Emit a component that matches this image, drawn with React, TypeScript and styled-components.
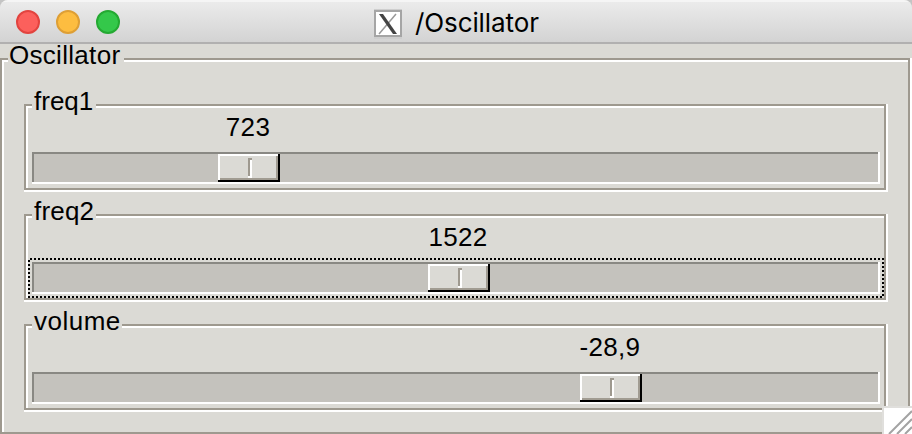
import React from "react";
import styled, { createGlobalStyle } from "styled-components";

const dark = "#9e998f";
const face = "#dbdad5";

const Global = createGlobalStyle`
  * { box-sizing: border-box; }
  body { margin: 0; overflow: hidden; background: #c4c4c4; }
`;

const Window = styled.main`
  position: relative;
  width: 912px;
  height: 434px;
  overflow: hidden;
  display: flex;
  flex-direction: column;
  background: ${face};
  border-radius: 8px 8px 0 0;
  color: #000;
  font-family: "Liberation Sans", Arial, sans-serif;
`;

const TitleBar = styled.header`
  height: 44px;
  flex: none;
  display: grid;
  grid-template-columns: 374px auto 1fr;
  align-items: center;
  background: linear-gradient(#f5f5f5 2px, #ebebeb 2px, #d3d3d3 42px);
  border-bottom: 2px solid #b1b0b0;
`;

const Lights = styled.div`
  display: flex;
  gap: 16px;
  padding: 2px 0 0 16px;
`;

const Light = styled.span<{ $fill: string; $edge: string }>`
  width: 24px;
  height: 24px;
  border-radius: 50%;
  background: ${(p) => p.$fill};
  border: 2px solid ${(p) => p.$edge};
`;

const Title = styled.h1`
  margin: 4px 0 0;
  padding-left: 13px;
  font: 400 26px/32px Inter, sans-serif;
  letter-spacing: -0.1px;
`;

const XIcon = styled.svg`
  display: block;
  margin-top: 5px;
`;

const Content = styled.div`
  height: 390px;
  padding-top: 14px;
`;

const Frame = styled.section<{ $height: number }>`
  display: flow-root;
  height: ${(p) => p.$height}px;
  background:
    linear-gradient(#fff, #fff) right top / 2px 100% no-repeat,
    linear-gradient(#fff, #fff) left bottom / 100% 2px no-repeat,
    linear-gradient(${dark}, ${dark}) left top / 100% 2px no-repeat,
    linear-gradient(${dark}, ${dark}) left top / 2px 100% no-repeat,
    linear-gradient(${dark}, ${dark}) right 2px top 0 / 2px calc(100% - 2px) no-repeat,
    linear-gradient(${dark}, ${dark}) left 0 bottom 2px / calc(100% - 2px) 2px no-repeat,
    linear-gradient(#fff, #fff) 2px 2px / calc(100% - 6px) 2px no-repeat,
    linear-gradient(#fff, #fff) 2px 2px / 2px calc(100% - 6px) no-repeat;
`;

const Legend = styled.h2<{ $width: number; $indent: number; $tracking: number }>`
  width: ${(p) => p.$width}px;
  height: 22px;
  margin: -14px 0 0 8px;
  padding-left: ${(p) => p.$indent}px;
  background: ${face};
  font-size: 26px;
  font-weight: 400;
  line-height: 22px;
  letter-spacing: ${(p) => p.$tracking}px;
  white-space: nowrap;
`;

const Sliders = styled.div`
  display: grid;
  gap: 22px;
  padding: 38px 24px 0;
`;

const Slider = styled(Frame)`
  position: relative;
`;

const Value = styled.output<{ $center: number }>`
  display: block;
  width: 100px;
  height: 28px;
  margin: 1px 0 11px ${(p) => p.$center - 50}px;
  text-align: center;
  font-size: 26px;
  line-height: 28px;
  letter-spacing: 0.3px;
`;

const Trough = styled.div`
  height: 32px;
  margin: 0 8px;
  padding: 2px;
  background:
    linear-gradient(#fff, #fff) right top / 2px 100% no-repeat,
    linear-gradient(#fff, #fff) left bottom / 100% 2px no-repeat,
    linear-gradient(#898883, #898883) left top / 100% 2px no-repeat,
    linear-gradient(#898883, #898883) left top / 2px 100% no-repeat,
    #c4c2bd;
`;

const Thumb = styled.div<{ $left: number }>`
  width: 62px;
  height: 28px;
  margin-left: ${(p) => p.$left}px;
  padding: 4px 0 0 30px;
  background:
    linear-gradient(#000, #000) right top / 2px 100% no-repeat,
    linear-gradient(#000, #000) left bottom / 100% 2px no-repeat,
    linear-gradient(#fff, #fff) left top / 60px 2px no-repeat,
    linear-gradient(#fff, #fff) left top / 2px 26px no-repeat,
    linear-gradient(#a19c92, #a19c92) right 2px top 2px / 2px 24px no-repeat,
    linear-gradient(#a19c92, #a19c92) 2px 24px / 58px 2px no-repeat,
    ${face};
`;

const Notch = styled.i`
  display: block;
  width: 4px;
  height: 20px;
  background:
    linear-gradient(${dark}, ${dark}) left top / 4px 2px no-repeat,
    linear-gradient(${dark}, ${dark}) left top / 2px 18px no-repeat,
    #fff;
`;

const dotsX = "repeating-linear-gradient(90deg, #000 0 2px, transparent 2px 4px)";
const dotsY = "repeating-linear-gradient(#000 0 2px, transparent 2px 4px)";

const FocusRing = styled.span`
  position: absolute;
  left: 4px;
  top: 44px;
  width: 856px;
  height: 40px;
  pointer-events: none;
  background:
    ${dotsX} 2px 0 / 854px 2px no-repeat,
    ${dotsX} 0 38px / 856px 2px no-repeat,
    ${dotsY} 0 2px / 2px 38px no-repeat,
    ${dotsY} 854px 0 / 2px 40px no-repeat;
`;

const ResizeGrip = styled.svg`
  position: absolute;
  right: 0;
  bottom: 0;
`;

const params = [
  { name: "freq1", value: "723", left: 184, center: 224, label: 64, tracking: 0 },
  { name: "freq2", value: "1522", left: 394, center: 434, label: 64, tracking: 0.2 },
  { name: "volume", value: "-28,9", left: 546, center: 586, label: 90, tracking: 0.5 },
];

export default function App() {
  return (
    <>
      <Global />
      <Window>
        <TitleBar>
          <Lights>
            <Light $fill="#fc605c" $edge="#e2443f" />
            <Light $fill="#fdbd40" $edge="#de9f35" />
            <Light $fill="#34c84a" $edge="#24a932" />
          </Lights>
          <XIcon width="28" height="30" viewBox="0 0 28 30">
            <rect x="0" y="0" width="28" height="30" fill="#cecece" />
            <rect x="1" y="2" width="26" height="25" fill="#fff" stroke="#a5a5a5" strokeWidth="2" />
            <path d="M5 25 22 5" stroke="#999" strokeWidth="1.5" />
            <path d="M5 5h4l14 20h-4z" fill="#444" />
          </XIcon>
          <Title>/Oscillator</Title>
        </TitleBar>
        <Content>
          <Frame $height={378}>
            <Legend $width={116} $indent={1} $tracking={0.3}>Oscillator</Legend>
            <Sliders>
              {params.map((p) => (
                <Slider key={p.name} $height={88}>
                  <Legend $width={p.label} $indent={2} $tracking={p.tracking}>{p.name}</Legend>
                  <Value $center={p.center}>{p.value}</Value>
                  <Trough>
                    <Thumb $left={p.left}>
                      <Notch />
                    </Thumb>
                  </Trough>
                  {p.name === "freq2" && <FocusRing />}
                </Slider>
              ))}
            </Sliders>
          </Frame>
        </Content>
        <ResizeGrip width="30" height="28" viewBox="0 0 30 28">
          <path d="M0 0h30v28H0z" fill="#e0dfdc" />
          <path d="M2 2h28v26H2z" fill="#fff" />
          <path d="M7 28 30 5M15 28l15-15M23 28l7-7" stroke="#a3a3a3" strokeWidth="2" />
        </ResizeGrip>
      </Window>
    </>
  );
}
